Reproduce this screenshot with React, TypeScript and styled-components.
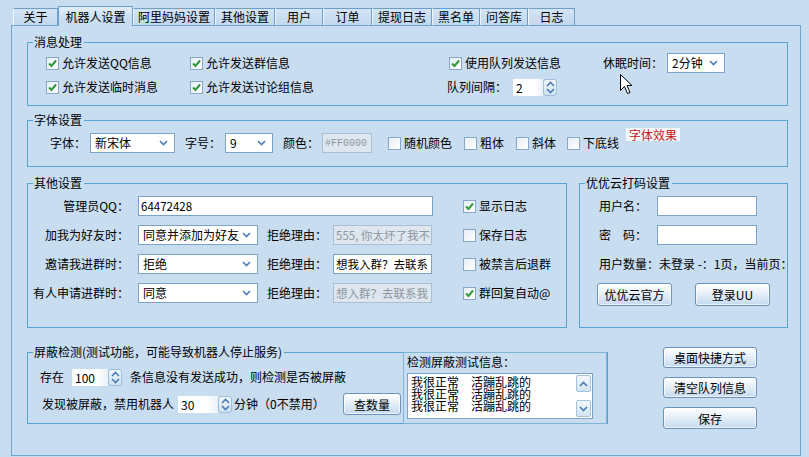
import React from 'react';
import styled, { createGlobalStyle } from 'styled-components';

const GlobalStyle = createGlobalStyle`
  html, body {
    margin: 0;
    padding: 0;
    background: #C9DDF1;
  }
  body {
    font-family: "Noto Sans CJK SC", "Liberation Sans", sans-serif;
    font-size: 12px;
    color: #000;
    text-spacing-trim: space-all;
    text-autospace: no-autospace;
  }
`

const Window = styled.div`
  position: relative;
  width: 809px;
  height: 457px;
  overflow: hidden;
  background: #C9DDF1;
  padding-top: 6px;
  box-sizing: border-box;
`

const TabBar = styled.div`
  display: flex;
  align-items: flex-end;
  height: 19px;
  padding-left: 13px;
  position: relative;
  z-index: 2;
`

const Tab = styled.div<{ $w: number; $active?: boolean }>`
  width: ${({ $w }) => $w}px;
  height: ${({ $active }) => ($active ? 20 : 17)}px;
  margin-bottom: ${({ $active }) => ($active ? -1 : 0)}px;
  box-sizing: border-box;
  border-top: 1px solid #6E9FC9;
  border-left: 1px solid ${({ $active }) => ($active ? '#6E9FC9' : '#EEF5FC')};
  border-right: 1px solid #6E9FC9;
  background: ${({ $active }) =>
    $active ? 'linear-gradient(#E2EEF9, #C9DDF1 60%)' : 'linear-gradient(#D3E4F4, #C2D8EE)'};
  display: flex;
  align-items: center;
  justify-content: center;
  line-height: 14px;
  white-space: nowrap;
`

const Panel = styled.div`
  margin-left: 11px;
  width: 790px;
  height: 431px;
  box-sizing: border-box;
  border: 1px solid #6FA6CE;
  padding: 9px 12px 0 15px;
  display: flex;
  flex-direction: column;
`

const Group = styled.fieldset<{ $h: number; $w?: number }>`
  margin: 0;
  padding: 0;
  min-width: 0;
  border: 1px solid #58A4D1;
  height: ${({ $h }) => $h}px;
  width: ${({ $w }) => ($w ? `${$w}px` : 'auto')};
  box-sizing: border-box;
  flex-shrink: 0;
`

const Legend = styled.legend`
  margin-left: 5px;
  padding: 0 2px 0 1px;
  font-size: 12px;
  line-height: 14px;
`

const GroupBody = styled.div<{ $pt: number; $pl: number; $gap?: number }>`
  display: flex;
  flex-direction: column;
  gap: ${({ $gap }) => $gap ?? 0}px;
  padding-top: ${({ $pt }) => $pt}px;
  padding-left: ${({ $pl }) => $pl}px;
`

const Row = styled.div<{ $h?: number }>`
  display: flex;
  align-items: center;
  height: ${({ $h }) => $h ?? 20}px;
  white-space: nowrap;
`

const Cell = styled.div<{ $w: number }>`
  width: ${({ $w }) => $w}px;
  display: flex;
  align-items: center;
  flex-shrink: 0;
`

const Text = styled.span<{ $ml?: number; $mr?: number }>`
  margin-left: ${({ $ml }) => $ml ?? 0}px;
  margin-right: ${({ $mr }) => $mr ?? 0}px;
  line-height: 14px;
  white-space: nowrap;
  flex-shrink: 0;
`

const FieldLabel = styled.span<{ $w: number; $mr: number }>`
  width: ${({ $w }) => $w}px;
  margin-right: ${({ $mr }) => $mr}px;
  text-align: right;
  flex-shrink: 0;
  line-height: 14px;
`

const Box = styled.span`
  width: 13px;
  height: 13px;
  box-sizing: border-box;
  border: 1px solid #86A8C6;
  background: linear-gradient(135deg, #E6EEF6, #FFFFFF);
  display: inline-flex;
  align-items: center;
  justify-content: center;
  flex-shrink: 0;
  margin-right: 3px;
`

const CheckWrap = styled.label<{ $ml?: number }>`
  display: flex;
  align-items: center;
  margin-left: ${({ $ml }) => $ml ?? 0}px;
  line-height: 14px;
  white-space: nowrap;
  flex-shrink: 0;
`

const Check = ({ label, on, ml }: { label: string; on?: boolean; ml?: number }) => (
  <CheckWrap $ml={ml}>
    <Box>
      {on && (
        <svg width="11" height="11" viewBox="0 0 11 11">
          <polyline points="2,5.5 4.5,8 9,2.5" fill="none" stroke="#2F9B35" strokeWidth="2" />
        </svg>
      )}
    </Box>
    {label}
  </CheckWrap>
)

const Chevron = ({ dir = 'down' }: { dir?: 'up' | 'down' }) => (
  <svg width="9" height="6" viewBox="0 0 9 6">
    <polyline
      points={dir === 'down' ? '1,1 4.5,4.5 8,1' : '1,5 4.5,1.5 8,5'}
      fill="none"
      stroke="#4A7DB8"
      strokeWidth="1.6"
    />
  </svg>
)

const SelectBox = styled.div<{ $w: number; $ml?: number }>`
  width: ${({ $w }) => $w}px;
  height: 20px;
  margin-left: ${({ $ml }) => $ml ?? 0}px;
  box-sizing: border-box;
  border: 1px solid #7EA3C6;
  background: #fff;
  display: flex;
  align-items: center;
  justify-content: space-between;
  padding: 0 6px 0 4px;
  flex-shrink: 0;
  line-height: 14px;
`

const Select = ({ w, value, ml }: { w: number; value: string; ml?: number }) => (
  <SelectBox $w={w} $ml={ml}>
    <span>{value}</span>
    <Chevron />
  </SelectBox>
)

const Input = styled.div<{ $w: number; $ml?: number; $disabled?: boolean; $mono?: boolean }>`
  width: ${({ $w }) => $w}px;
  height: 20px;
  margin-left: ${({ $ml }) => $ml ?? 0}px;
  box-sizing: border-box;
  border: 1px solid ${({ $disabled }) => ($disabled ? '#A9BFD3' : '#7EA3C6')};
  background: ${({ $disabled }) => ($disabled ? '#DEE7EF' : '#fff')};
  color: ${({ $disabled }) => ($disabled ? '#8E969E' : '#000')};
  padding: 0 2px;
  display: flex;
  align-items: center;
  overflow: hidden;
  white-space: nowrap;
  flex-shrink: 0;
  font-family: ${({ $mono }) => ($mono ? '"Liberation Mono", monospace' : 'inherit')};
  font-size: ${({ $mono }) => ($mono ? 10 : 11.5)}px;
`

const SpinField = styled.div<{ $w: number }>`
  width: ${({ $w }) => $w}px;
  height: 17px;
  box-sizing: border-box;
  background: linear-gradient(90deg, #FFFFFF 70%, #E8F1F9);
  padding-left: 3px;
  display: flex;
  align-items: center;
  font-size: 12px;
`

const SpinBtn = styled.div`
  width: 14px;
  height: 17px;
  box-sizing: border-box;
  border: 1px solid #9FBEDB;
  border-radius: 3px;
  background: linear-gradient(#F3F8FD, #CFE1F2);
  display: flex;
  flex-direction: column;
  align-items: center;
  justify-content: space-evenly;
  flex-shrink: 0;
`

const SpinWrap = styled.div<{ $ml?: number; $mr?: number }>`
  display: flex;
  align-items: center;
  margin-left: ${({ $ml }) => $ml ?? 0}px;
  margin-right: ${({ $mr }) => $mr ?? 0}px;
  flex-shrink: 0;
`

const Spin = ({ w, value, ml, mr }: { w: number; value: string; ml?: number; mr?: number }) => (
  <SpinWrap $ml={ml} $mr={mr}>
    <SpinField $w={w}>{value}</SpinField>
    <SpinBtn>
      <Chevron dir="up" />
      <Chevron />
    </SpinBtn>
  </SpinWrap>
)

const Btn = styled.button<{ $w: number; $h: number; $ml?: number }>`
  width: ${({ $w }) => $w}px;
  height: ${({ $h }) => $h}px;
  margin: 0 0 0 ${({ $ml }) => $ml ?? 0}px;
  padding: 0;
  box-sizing: border-box;
  border: 1px solid #6C93BC;
  border-radius: 3px;
  background: linear-gradient(#FFFFFF, #E3EEF8 50%, #C4D9EE);
  box-shadow: inset 0 0 0 1px rgba(255, 255, 255, 0.7);
  font-family: "Noto Sans CJK SC", sans-serif;
  font-size: 12px;
  color: #000;
  flex-shrink: 0;
`

const Effect = styled.span`
  margin-left: 7px;
  align-self: flex-start;
  margin-top: -5px;
  padding: 0 3px;
  background: #F4F7FA;
  color: #C8141C;
  line-height: 13px;
`

const TwoCols = styled.div`
  display: flex;
  gap: 12px;
  margin-top: 9px;
`

const FontGroupWrap = styled.div`
  margin-top: 7px;
`

const BottomRow = styled.div`
  display: flex;
  align-items: flex-start;
  margin-top: 17px;
`

const DetectBody = styled.div`
  display: flex;
  align-items: flex-start;
`

const DetectLeft = styled.div`
  width: 375px;
  box-sizing: border-box;
  padding: 8px 2px 0 12px;
  display: flex;
  flex-direction: column;
  gap: 6px;
`

const DetectBox = styled.div`
  width: 204px;
  height: 72px;
  box-sizing: border-box;
  margin-top: -7px;
  border: 1px solid #7DB6D9;
  padding: 2px 0 0 3px;
  display: flex;
  flex-direction: column;
`

const LogArea = styled.div`
  margin-top: 4px;
  width: 186px;
  height: 46px;
  box-sizing: border-box;
  border: 1px solid #7EA3C6;
  background: #fff;
  display: flex;
`

const LogLines = styled.div`
  flex: 1;
  padding: 2px 0 0 3px;
  line-height: 12px;
  white-space: pre;
`

const ScrollCol = styled.div`
  width: 16px;
  display: flex;
  flex-direction: column;
  justify-content: space-between;
  padding: 1px 1px 1px 0;
  box-sizing: border-box;
`

const ScrollBtn = styled.div`
  width: 15px;
  height: 17px;
  box-sizing: border-box;
  border: 1px solid #A6C3DE;
  border-radius: 2px;
  background: linear-gradient(#F3F8FD, #D3E4F3);
  display: flex;
  align-items: center;
  justify-content: center;
`

const SideButtons = styled.div`
  display: flex;
  flex-direction: column;
  gap: 9px;
  margin: 2px 0 0 55px;
`

const Cursor = styled.svg`
  position: absolute;
  left: 620px;
  top: 74px;
`

const tabs: [string, number][] = [
  ['关于', 45],
  ['机器人设置', 75],
  ['阿里妈妈设置', 82],
  ['其他设置', 60],
  ['用户', 48],
  ['订单', 49],
  ['提现日志', 60],
  ['黑名单', 48],
  ['问答库', 48],
  ['日志', 47],
]

const otherRows = [
  { label: '加我为好友时：', sel: '同意并添加为好友', reason: '555, 你太坏了我不', disabled: true, check: '保存日志', on: false },
  { label: '邀请我进群时：', sel: '拒绝', reason: '想我入群？去联系', disabled: false, check: '被禁言后退群', on: false },
  { label: '有人申请进群时：', sel: '同意', reason: '想入群？去联系我', disabled: true, check: '群回复自动@', on: true },
]

function App(): JSX.Element {
  return (
    <Window>
      <GlobalStyle />
      <TabBar>
        {tabs.map(([t, w], i) => (
          <Tab key={t} $w={w} $active={i === 1}>
            {t}
          </Tab>
        ))}
      </TabBar>
      <Panel>
        <Group $h={71}>
          <Legend>消息处理</Legend>
          <GroupBody $pt={4} $pl={18} $gap={4}>
            <Row>
              <Cell $w={144}><Check label="允许发送QQ信息" on /></Cell>
              <Cell $w={259}><Check label="允许发送群信息" on /></Cell>
              <Cell $w={154}><Check label="使用队列发送信息" on /></Cell>
              <Text $mr={4}>休眠时间：</Text>
              <Select w={58} value="2分钟" />
            </Row>
            <Row>
              <Cell $w={144}><Check label="允许发送临时消息" on /></Cell>
              <Cell $w={257}><Check label="允许发送讨论组信息" on /></Cell>
              <Text $mr={6}>队列间隔：</Text>
              <Spin w={30} value="2" />
            </Row>
          </GroupBody>
        </Group>

        <FontGroupWrap>
          <Group $h={54}>
            <Legend>字体设置</Legend>
            <GroupBody $pt={6} $pl={22}>
              <Row>
                <Text $mr={4}>字体：</Text>
                <Select w={85} value="新宋体" />
                <Text $ml={10} $mr={4}>字号：</Text>
                <Select w={48} value="9" />
                <Text $ml={10} $mr={3}>颜色：</Text>
                <Input $w={50} $disabled $mono>#FF0000</Input>
                <Check label="随机颜色" ml={16} />
                <Check label="粗体" ml={12} />
                <Check label="斜体" ml={12} />
                <Check label="下底线" ml={11} />
                <Effect>字体效果</Effect>
              </Row>
            </GroupBody>
          </Group>
        </FontGroupWrap>

        <TwoCols>
          <Group $h={152} $w={540}>
            <Legend>其他设置</Legend>
            <GroupBody $pt={6} $pl={0} $gap={9}>
              <Row>
                <FieldLabel $w={101} $mr={9}>管理员QQ：</FieldLabel>
                <Input $w={295}>64472428</Input>
                <Check label="显示日志" on ml={30} />
              </Row>
              {otherRows.map(r => (
                <Row key={r.label}>
                  <FieldLabel $w={101} $mr={9}>{r.label}</FieldLabel>
                  <Select w={120} value={r.sel} />
                  <Text $ml={9} $mr={6}>拒绝理由：</Text>
                  <Input $w={99} $disabled={r.disabled}>{r.reason}</Input>
                  <Check label={r.check} on={r.on} ml={31} />
                </Row>
              ))}
            </GroupBody>
          </Group>

          <Group $h={152} $w={209}>
            <Legend>优优云打码设置</Legend>
            <GroupBody $pt={6} $pl={19} $gap={9}>
              <Row>
                <Text $mr={10}>用户名：</Text>
                <Input $w={100} />
              </Row>
              <Row>
                <Text $mr={10}>密　码：</Text>
                <Input $w={100} />
              </Row>
              <Row>
                <Text>用户数量：未登录 -：1页，当前页：</Text>
              </Row>
              <Row $h={23}>
                <Btn $w={75} $h={23} $ml={-2}>优优云官方</Btn>
                <Btn $w={75} $h={23} $ml={23}>登录UU</Btn>
              </Row>
            </GroupBody>
          </Group>
        </TwoCols>

        <BottomRow>
          <Group $h={79} $w={581}>
            <Legend>屏蔽检测(测试功能，可能导致机器人停止服务)</Legend>
            <DetectBody>
              <DetectLeft>
                <Row>
                  <Text $mr={8}>存在</Text>
                  <Spin w={36} value="100" mr={8} />
                  <Text>条信息没有发送成功，则检测是否被屏蔽</Text>
                </Row>
                <Row $h={22}>
                  <Text $ml={2} $mr={4}>发现被屏蔽，禁用机器人</Text>
                  <Spin w={40} value="30" mr={2} />
                  <Text>分钟（0不禁用）</Text>
                  <Btn $w={58} $h={22} style={{ marginLeft: 'auto' }}>查数量</Btn>
                </Row>
              </DetectLeft>
              <DetectBox>
                <Text>检测屏蔽测试信息：</Text>
                <LogArea>
                  <LogLines>
                    {'我很正常　活蹦乱跳的\n我很正常　活蹦乱跳的\n我很正常　活蹦乱跳的'}
                  </LogLines>
                  <ScrollCol>
                    <ScrollBtn><Chevron dir="up" /></ScrollBtn>
                    <ScrollBtn><Chevron /></ScrollBtn>
                  </ScrollCol>
                </LogArea>
              </DetectBox>
            </DetectBody>
          </Group>

          <SideButtons>
            <Btn $w={94} $h={21}>桌面快捷方式</Btn>
            <Btn $w={94} $h={21}>清空队列信息</Btn>
            <Btn $w={94} $h={22}>保存</Btn>
          </SideButtons>
        </BottomRow>
      </Panel>

      <Cursor width="13" height="21" viewBox="0 0 13 21">
        <path d="M0.5,0.5 L0.5,16.5 L4.5,12.5 L7.5,19.5 L10,18.5 L7,11.5 L12,11.5 Z" fill="#fff" stroke="#000" strokeWidth="1" />
      </Cursor>
    </Window>
  );
}

export default App;
